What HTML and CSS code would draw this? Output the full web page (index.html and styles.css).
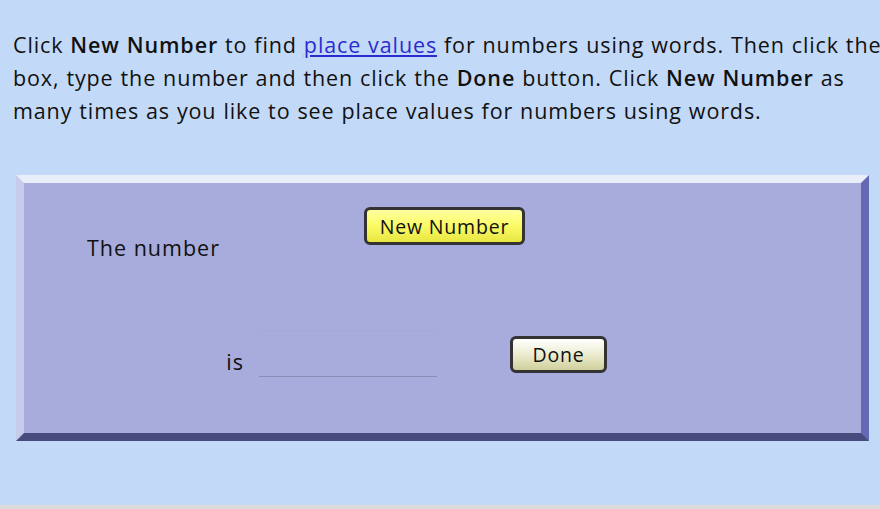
FILE: index.html
```html
<!DOCTYPE html>
<html lang="en">
<head>
  <meta charset="UTF-8">
  <title>Place values in words</title>
  <link rel="stylesheet" href="styles.css">
</head>
<body>
<main class="page">

  <p class="intro">
    Click <b>New Number</b> to find <a href="#">place values</a> for numbers using words. Then click the<br>
    box, type the number and then click the <b>Done</b> button. Click <b>New Number</b> as<br>
    many times as you like to see place values for numbers using words.
  </p>

  <div class="panel">
    <div class="panel-row row-top">
      <div class="label label-number">The number</div>
      <button type="button" class="btn btn-new">New Number</button>
    </div>
    <div class="panel-row row-bottom">
      <div class="label label-is">is</div>
      <input type="text" class="answer">
      <button type="button" class="btn btn-done">Done</button>
    </div>
  </div>

</main>
<div class="window-edge"></div>
</body>
</html>
```

FILE: styles.css
```css
html, body {
  margin: 0;
  height: 100%;
}

body {
  background-color: #c3d9f8;
  font-family: "Open Sans", "DejaVu Sans", sans-serif;
  color: #111;
  display: flex;
  flex-direction: column;
  overflow: hidden;
}

.page {
  flex: 1;
}

.intro {
  margin: 0;
  padding: 28px 0 0 13px;
  white-space: nowrap;
  font-size: 21.5px;
  letter-spacing: 0.88px;
  word-spacing: 0.5px;
  line-height: 33px;
}

.intro b {
  font-weight: 600;
}

.intro a {
  color: #2b2bd0;
  text-decoration: underline;
}

.panel {
  box-sizing: border-box;
  margin: 48px 0 0 16px;
  width: 853px;
  height: 266px;
  background-color: #a7acdc;
  border-style: solid;
  border-width: 8px;
  border-color: #eaeef9 #6469b5 #474b7e #c7cbec;
  display: flex;
  flex-direction: column;
}

.panel-row {
  display: flex;
  align-items: flex-start;
}

.row-top {
  margin-top: 24px;
  height: 38px;
}

.row-bottom {
  margin-top: 85px;
  height: 46px;
}

.label {
  box-sizing: border-box;
  font-size: 21.5px;
  letter-spacing: 1px;
  line-height: 26px;
}

.label-number {
  width: 340px;
  padding: 28px 0 0 63px;
}

.label-is {
  width: 235px;
  padding: 19px 15px 0 0;
  text-align: right;
}

.answer {
  box-sizing: border-box;
  width: 178px;
  height: 47px;
  margin: 0;
  padding: 0 6px;
  background: transparent;
  border: none;
  border-top: 1px solid #a4a9d8;
  border-bottom: 1px solid #8a8db5;
  font-family: inherit;
  font-size: 20px;
}

.btn {
  box-sizing: border-box;
  border: 3px solid #333;
  border-radius: 6px;
  font-family: inherit;
  font-size: 19.5px;
  letter-spacing: 0.8px;
  color: #111;
  padding: 0;
  cursor: pointer;
}

.btn-new {
  width: 161px;
  height: 38px;
  background: linear-gradient(#ffffa0, #fcfc6a 45%, #e8e640);
}

.btn-done {
  width: 97px;
  height: 37px;
  margin: 6px 0 0 73px;
  background: linear-gradient(#ffffff, #ececd0 50%, #cfcf9c);
}

.window-edge {
  height: 4px;
  background-color: #dcdcdc;
}
```
